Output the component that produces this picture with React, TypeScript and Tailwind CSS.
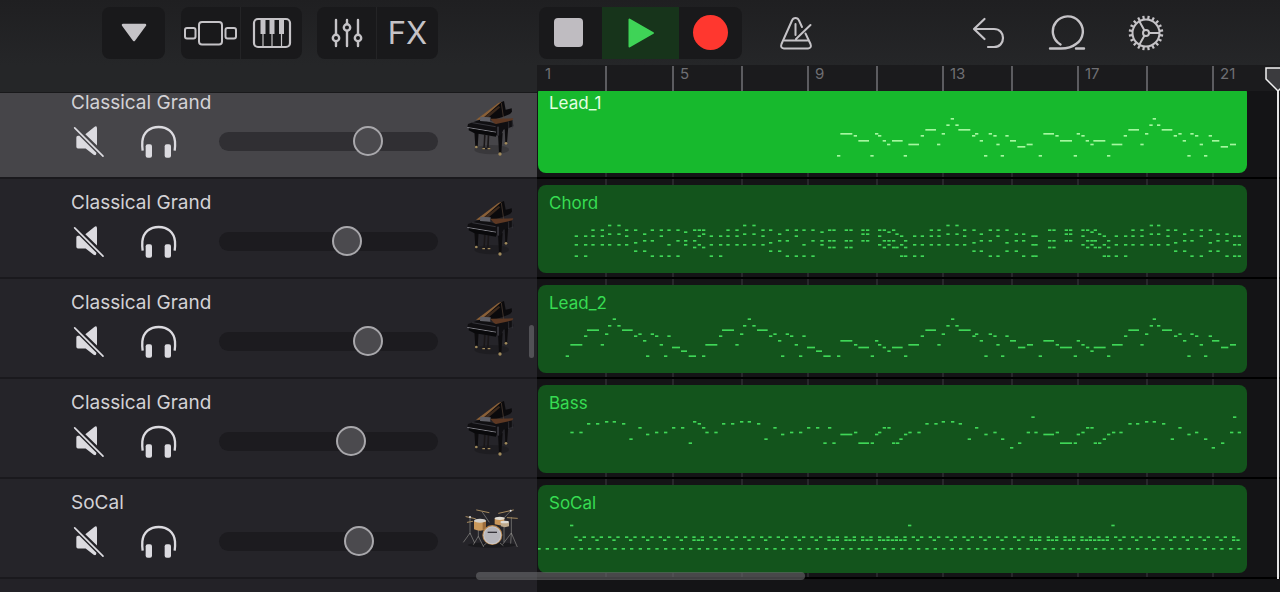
import { useState } from "react";

/* A note is [start, pitch row, length]; three units make one pixel. */
type Note = [number, number, number?];

const shift = (notes: Note[], dx: number, dy = 0): Note[] =>
  notes.map(([x, y, w]) => [x + dx, y + dy, w]);

const LEAD_1: Note[] = shift(
  [
    [51, 198], [61, 132, 36], [101, 138], [115, 153, 32], [151, 198], [165, 132], [174, 138], [188, 153],
    [201, 164], [216, 153, 32], [251, 198], [265, 164, 32], [302, 138], [316, 120, 32], [351, 164],
    [365, 132], [379, 106], [392, 87], [406, 106], [415, 120, 36], [456, 138], [465, 132], [479, 153],
    [492, 198], [506, 132], [520, 138], [529, 164], [542, 198], [556, 138], [570, 153, 18], [592, 171, 24],
    [620, 164, 18], [656, 198], [670, 132, 32], [706, 138], [720, 153, 36], [761, 198], [770, 132],
    [784, 138], [797, 153], [811, 164], [820, 153, 36], [861, 198], [875, 164, 32], [911, 138],
    [925, 120, 32], [961, 164], [975, 132], [988, 106], [998, 87], [1011, 106], [1025, 120, 32],
    [1061, 138], [1075, 132], [1088, 153], [1102, 198], [1111, 132], [1125, 138], [1139, 164],
    [1152, 198], [1166, 138], [1176, 153, 22], [1202, 171, 22], [1230, 164, 18],
  ],
  870,
  30,
);

const LEAD_2: Note[] = [
  [107, 229], [121, 195, 36], [162, 169], [171, 151, 36], [212, 195], [225, 163], [234, 138], [248, 118],
  [262, 138], [276, 151, 32], [312, 169], [325, 163], [339, 183], [348, 229], [362, 163], [375, 169],
  [389, 195], [402, 229], [412, 169], [426, 203, 24], [453, 214, 18], [476, 229, 22], [516, 229],
  [526, 195, 36], [567, 169], [576, 151, 36], [616, 195], [630, 163], [639, 138], [653, 118], [667, 138],
  [681, 151, 32], [717, 169], [730, 163], [744, 183], [753, 229], [767, 163], [780, 169], [794, 195],
  [807, 229], [817, 169], [831, 203, 24], [858, 214, 18], [880, 229, 22], [921, 229], [931, 183, 36],
  [972, 195], [985, 203, 32], [1022, 229], [1035, 183], [1044, 195], [1058, 203], [1072, 214],
  [1086, 203, 32], [1122, 229], [1135, 195, 32],
  ...shift(
    [
      [62, 169], [76, 151, 32], [112, 195], [125, 163], [139, 138], [153, 118], [166, 138], [176, 151, 36],
      [217, 169], [225, 163], [239, 183], [253, 229], [266, 163], [280, 169], [289, 195], [303, 229],
      [316, 169], [330, 183, 18], [354, 203, 22], [381, 195, 18], [416, 229], [430, 183, 32], [467, 195],
      [480, 203, 36], [521, 229], [530, 183], [544, 195], [558, 203], [571, 214], [581, 203, 36],
      [621, 229], [636, 195, 32], [672, 169], [685, 151, 32], [721, 195], [735, 163], [749, 138],
      [758, 118], [771, 138], [786, 151, 30], [822, 169], [835, 163], [849, 183], [862, 229], [871, 163],
      [885, 169], [899, 195], [912, 229], [926, 169], [936, 183, 22], [963, 203, 22], [990, 195, 18],
    ],
    1110,
  ),
];

const BASS: Note[] = [
  [121, 158], [148, 158], [171, 132], [198, 132], [225, 126], [248, 126], [276, 132], [298, 178],
  [325, 144], [348, 164], [375, 158], [402, 158], [426, 144], [453, 144], [476, 190], [489, 126],
  [503, 132], [516, 144], [526, 158], [553, 158], [576, 132], [603, 132], [630, 126], [653, 126],
  [681, 132], [703, 178], [730, 144], [753, 164], [780, 158], [807, 158], [831, 144], [858, 144],
  [880, 190], [894, 144], [907, 190], [931, 164, 36], [972, 158], [985, 190, 32], [1022, 190],
  [1035, 164], [1044, 158], [1058, 144], [1072, 144], [1086, 190], [1098, 190], [1108, 178], [1122, 164],
  ...shift(
    [
      [25, 158], [52, 158], [76, 132], [103, 132], [125, 126], [153, 126], [176, 132], [203, 178],
      [225, 144], [253, 164], [280, 158], [303, 178], [330, 204], [354, 190], [380, 158], [394, 112],
      [403, 158], [430, 164, 32], [467, 158], [480, 190, 36], [521, 190], [530, 164], [544, 158],
      [558, 144], [571, 144], [581, 190], [594, 190], [608, 178], [621, 164], [636, 158], [658, 158],
      [685, 132], [708, 132], [735, 126], [758, 126], [786, 132], [812, 178], [835, 144], [862, 164],
      [885, 158], [912, 178], [935, 204], [963, 190], [990, 158], [999, 112], [1013, 158],
    ],
    1110,
  ),
];

const VOICINGS: Record<string, number[]> = {
  a: [169, 195, 229],
  b: [151, 169, 195],
  c: [137, 163, 195],
  d: [151, 189, 214],
  e: [163, 183, 214],
  f: [151, 183, 229],
  g: [151, 169, 229],
  h: [151, 195, 229],
  i: [157, 183, 195],
  j: [151, 183, 203],
  k: [151, 163, 183],
  l: [163, 195, 229],
  m: [163, 183, 229],
  n: [183, 203, 229],
  o: [151, 163, 203],
  p: [163, 203],
};

const CHORD_STEPS: [number, string][] = [
  [134, "a"], [162, "a"], [184, "b"], [212, "b"], [234, "c"], [262, "c"], [285, "b"], [312, "d"],
  [339, "e"], [362, "f"], [389, "g"], [412, "h"], [439, "f"], [462, "i"], [489, "j"], [503, "b"],
  [516, "o"], [539, "a"], [567, "a"], [589, "b"], [616, "b"], [639, "c"], [667, "c"], [694, "b"],
  [717, "d"], [744, "e"], [767, "f"], [794, "g"], [817, "h"], [844, "f"], [871, "i"], [894, "j"],
  [907, "j"], [944, "j"], [958, "j"], [994, "k"], [1008, "k"], [1044, "b"], [1058, "j"], [1072, "i"],
  [1086, "j"], [1096, "p"], [1110, "a"], [1122, "n"], [1149, "a"], [1172, "a"], [1199, "b"], [1222, "b"],
  [1249, "c"], [1276, "c"], [1299, "b"], [1327, "d"], [1349, "e"], [1376, "f"], [1399, "g"], [1426, "d"],
  [1454, "e"], [1476, "m"], [1504, "a"], [1513, "a"], [1554, "j"], [1567, "j"], [1604, "k"], [1617, "k"],
  [1654, "b"], [1668, "j"], [1681, "i"], [1691, "j"], [1704, "p"], [1718, "a"], [1731, "n"], [1754, "a"],
  [1782, "a"], [1804, "b"], [1831, "b"], [1859, "c"], [1881, "c"], [1909, "b"], [1932, "d"], [1959, "e"],
  [1981, "f"], [2009, "g"], [2036, "d"], [2059, "e"], [2086, "m"], [2109, "a"], [2123, "a"],
];

const CHORD: Note[] = CHORD_STEPS.flatMap(([x, v]) => VOICINGS[v].map((y): Note => [x, y]));

function buildDrums(): Note[] {
  const notes: Note[] = [[120, 137], [1134, 137], [1744, 137]];
  for (let i = 0; i < 84; i++) notes.push([Math.round(22 + i * 25.3), 207]);
  const fills = [7, 15, 16, 17, 18, 19, 27, 28, 29, 30, 31, 39];
  const rolls = [18, 19, 30, 31];
  for (let cell = 0; cell < 40; cell++) {
    const at = (step: number) => Math.round(133 + cell * 50.6 + step * 12.6);
    notes.push([at(0), 172], [at(1), 181]);
    if (cell < 39) notes.push([at(2), 172]);
    if (fills.includes(cell)) notes.push([at(0), 181]);
    if (fills.includes(cell) && cell < 39) notes.push([at(2), 181]);
    if (rolls.includes(cell) && cell % 2 === 0) notes.push([at(3), 181]);
  }
  return notes;
}

const TRACKS = [
  { name: "Classical Grand", region: "Lead_1", volume: 71, art: "piano", notes: LEAD_1 },
  { name: "Classical Grand", region: "Chord", volume: 60, art: "piano", notes: CHORD },
  { name: "Classical Grand", region: "Lead_2", volume: 71, art: "piano", notes: LEAD_2 },
  { name: "Classical Grand", region: "Bass", volume: 62, art: "piano", notes: BASS },
  { name: "SoCal", region: "SoCal", volume: 66, art: "drums", notes: buildDrums() },
];

const BARS = [1, 5, 9, 13, 17, 21];

function Piano() {
  return (
    <svg viewBox="75 35 150 180" className="h-[60px] w-[50px]" aria-hidden="true">
      <ellipse cx="155" cy="190" rx="52" ry="14" fill="#000" opacity=".18" />
      <path d="M103 135l3 47h7l3-45zM174 142l3 58h7l4-60zM194 122l2 48h5l4-50z" fill="#0d0c0e" />
      <path d="M132 145l-2 42h4l3-40zM143 147l-2 40h5l2-40zM126 184h25v5h-25z" fill="#1a1718" />
      <path d="M113 98L176 51l16-7 5 26 18-4 1 10-6 7-22 9-40 12z" fill="#0b0a0c" />
      <path d="M108 100L175 50l10-4-62 55z" fill="#8a6038" />
      <path d="M126 97l50-38 5 4-40 34z" fill="#3a281c" />
      <path d="M184 50l7 48" stroke="#58463a" strokeWidth="2" />
      <path d="M150 97l70-1-5 10-48 9z" fill="#5d3823" />
      <path d="M84 113l40-14 44 14 50-11 2 18-16 6-14 4-8 19-76-10-24-16z" fill="#100f12" />
      <path d="M121 91l31 2-1 13-31-2z" fill="#5f5f66" />
      <path d="M97 109l70 12" stroke="#4a4a52" strokeWidth="2" />
      <path d="M82 122l86 14v3l-86-14z" fill="#85858c" />
      <path d="M86 126l82 13v12l-66-11-16-8z" fill="#09090b" />
      <path d="M174 121v27" stroke="#55555d" strokeWidth="3" />
      <path d="M206 106v22M217 102v24" stroke="#39393f" strokeWidth="2" />
      <g fill="#a08a5c">
        <circle cx="109" cy="182" r="4" />
        <circle cx="180" cy="203" r="5" />
        <circle cx="198" cy="171" r="4" />
        <path d="M127 185h8v4h-8zM143 185h8v4h-8z" />
      </g>
    </svg>
  );
}

function Drums() {
  return (
    <svg viewBox="33 82 174 126" className="h-[42px] w-[58px]" aria-hidden="true">
      <ellipse cx="125" cy="196" rx="72" ry="8" fill="#000" opacity=".3" />
      <g fill="none" stroke="#8d8b88" strokeWidth="2">
        <path d="M60 114v50M60 160l-20 28M60 160l14 30M85 148v25M85 170l-15 25M85 170l16 32M96 96l22 32" />
        <path d="M182 94l-25 26M184 112v52M184 160l-26 34M184 160l18 42M184 160l-2 32M162 138v50M110 190l-10 8M150 190l10 8" />
      </g>
      <path d="M72 124h36v25q-18 8-36 0z" fill="#c9985b" />
      <path d="M98 127h10v22l-10 2z" fill="#9b6c3b" />
      <ellipse cx="90" cy="123" rx="18" ry="6" fill="#d3d0ca" />
      <path d="M134 116h29v18q-14 5-29 0z" fill="#c99558" />
      <ellipse cx="149" cy="116" rx="15" ry="5" fill="#dedad2" />
      <path d="M152 128h25v12q-12 5-25 0z" fill="#bda98c" />
      <ellipse cx="164" cy="127" rx="13" ry="4" fill="#dddad4" />
      <circle cx="127" cy="166" r="30" fill="#b98850" />
      <circle cx="127" cy="167" r="27" fill="#c7c6ca" />
      <circle cx="127" cy="167" r="24" fill="#b6b5bb" />
      <path d="M113 158h28" stroke="#36343a" strokeWidth="4" />
      <g stroke="#a58a5e" strokeWidth="3" strokeLinecap="round">
        <path d="M80 91l37 8M146 101l44-10M48 111l28 6M172 114l30 2M52 128l16-3" />
      </g>
      <circle cx="60" cy="112" r="3" fill="#ddd" />
      <circle cx="182" cy="93" r="3" fill="#ddd" />
    </svg>
  );
}

function MuteIcon() {
  return (
    <svg viewBox="42 117 96 98" className="h-[33px] w-8" fill="currentColor" aria-hidden="true">
      <path d="M79 144l26-21q9-6 9 3v52zM57 149h4l51 51v2q-1 8-8 4l-24-19H57q-5 0-5-5v-28q0-5 5-5z" />
      <path d="M47 125l85 85" stroke="currentColor" strokeWidth="5" strokeLinecap="round" />
    </svg>
  );
}

function HeadphonesIcon() {
  return (
    <svg viewBox="241 113 111 99" className="h-[33px] w-[37px]" aria-hidden="true">
      <path d="M249 190q-2-14-1-28c3-28 23-43 49-43s46 15 49 43q1 14-1 28" fill="none" stroke="currentColor" strokeWidth="7" />
      <rect x="258" y="171" width="19" height="40" rx="6" fill="currentColor" />
      <rect x="315" y="171" width="19" height="40" rx="6" fill="currentColor" />
    </svg>
  );
}

function TrackHeader({ track, selected }: { track: (typeof TRACKS)[number]; selected: boolean }) {
  const [volume, setVolume] = useState(track.volume);
  return (
    <div
      className={`flex h-[100px] shrink-0 items-start gap-[23px] border-b-2 border-[#1a191d] pl-[71px] ${
        selected ? "bg-[#464549]" : "bg-[#252429]"
      }`}
    >
      <div className="flex w-[367px] flex-col gap-3 pt-3.5">
        <div className="text-[19px] leading-5 text-[#d3d2d6]">{track.name}</div>
        <div className="flex h-8 items-center pl-0.5 text-[#dcdbe0]">
          <button type="button" aria-label={`Mute ${track.region}`}>
            <MuteIcon />
          </button>
          <button type="button" aria-label={`Solo ${track.region}`} className="ml-[35px]">
            <HeadphonesIcon />
          </button>
          <input
            type="range"
            aria-label={`${track.region} volume`}
            value={volume}
            onChange={(e) => setVolume(Number(e.target.value))}
            className={`ml-auto h-[19px] w-[219px] appearance-none rounded-full [&::-webkit-slider-thumb]:size-[30px] [&::-webkit-slider-thumb]:appearance-none [&::-webkit-slider-thumb]:rounded-full [&::-webkit-slider-thumb]:border-2 [&::-webkit-slider-thumb]:border-[#a9a8ac] [&::-webkit-slider-thumb]:bg-[#4b4a4e] ${
              selected ? "bg-[#302f33]" : "bg-[#1c1b1f]"
            }`}
          />
        </div>
      </div>
      <div className="flex h-full w-[58px] items-center justify-center">
        {track.art === "piano" ? <Piano /> : <Drums />}
      </div>
    </div>
  );
}

function Region({ track, selected }: { track: (typeof TRACKS)[number]; selected: boolean }) {
  return (
    <div
      className={`relative h-[88px] w-[709px] shrink-0 overflow-hidden rounded-lg ${
        selected ? "bg-[#17b92d]" : "bg-[#13541c]"
      }`}
    >
      <div className={`pt-2 pl-[11px] text-[17px] leading-5 ${selected ? "text-[#e4ffe2]" : "text-[#37dc52]"}`}>
        {track.region}
      </div>
      <svg
        viewBox="24 15 2127 264"
        className="absolute inset-0 h-[88px] w-[709px]"
        fill={selected ? "#a5f7a0" : "#3fd757"}
        aria-hidden="true"
      >
        {track.notes.map(([x, y, w], i) => (
          <rect key={i} x={x} y={y - 3} width={w ?? 10} height="5" />
        ))}
      </svg>
    </div>
  );
}

function BarGrid({ labels }: { labels?: boolean }) {
  const tick = labels ? "border-l-2 border-[#5c5c60]" : "border-l-2 border-[#28282b]";
  return (
    <div className="flex h-full">
      {BARS.map((bar) => (
        <div key={bar} className={`grid w-[135px] shrink-0 grid-cols-2 text-[#6f6f73] ${bar === 1 ? "" : tick}`}>
          <span className={`text-[15px] leading-4 ${bar === 1 ? "pl-2" : "pl-1.5"}`}>{labels ? bar : ""}</span>
          <span className={tick} />
        </div>
      ))}
    </div>
  );
}

const TEETH = Array.from({ length: 20 }, (_, i) => i * 18 + 9);

function Toolbar() {
  return (
    <header className="flex h-[65px] shrink-0 items-center bg-linear-to-b from-[#1f1f21] to-[#252628] pr-[116px] text-[#c5c3c7]">
      <div className="flex h-[52px] w-[539px] shrink-0 pl-[102px]">
        <button type="button" aria-label="Menu" className="flex w-[63px] items-center justify-center rounded-lg bg-[#19191b]">
          <svg viewBox="0 0 28 20" className="h-5 w-7" aria-hidden="true">
            <path d="M3 2h22L14 17z" fill="currentColor" stroke="currentColor" strokeWidth="2.5" strokeLinejoin="round" />
          </svg>
        </button>
        <div className="ml-4 flex w-[121px] overflow-hidden rounded-lg bg-[#19191b]">
          <button type="button" aria-label="Sound browser" className="flex w-[60px] items-center justify-center border-r border-[#242426]">
            <svg viewBox="0 0 54 26" className="h-[26px] w-[54px]" fill="none" stroke="currentColor" strokeWidth="2" aria-hidden="true">
              <rect x="15" y="2" width="23" height="22.5" rx="3" />
              <rect x="1" y="8" width="10.5" height="10.5" rx="2" />
              <rect x="41.500" y="8" width="10.5" height="10.5" rx="2" />
            </svg>
          </button>
          <button type="button" aria-label="Instrument" className="flex flex-1 items-center justify-center">
            <svg viewBox="0 0 40 32" className="h-8 w-10" fill="none" stroke="currentColor" strokeWidth="2.200" aria-hidden="true">
              <rect x="2" y="2" width="36" height="28" rx="4" />
              <path d="M11 17v13M20 17v13M29.500 17v13" strokeWidth="1.2" />
              <path d="M8.500 3h5v14h-5zM17.500 3h5v14h-5zM27 3h5v14h-5z" fill="currentColor" stroke="none" />
            </svg>
          </button>
        </div>
        <div className="ml-[15px] flex w-[121px] overflow-hidden rounded-lg bg-[#19191b]">
          <button type="button" aria-label="Track controls" className="flex w-[60px] items-center justify-center border-r border-[#242426]">
            <svg viewBox="0 0 32 30" className="h-[30px] w-8" fill="none" stroke="currentColor" strokeWidth="2.400" strokeLinecap="round" aria-hidden="true">
              <path d="M5 2v14M5 24v4M16 2v4M16 13v15M27 2v14M27 24v4" />
              <circle cx="5" cy="20" r="3.200" />
              <circle cx="16" cy="9.500" r="3.200" />
              <circle cx="27" cy="20" r="3.200" />
            </svg>
          </button>
          <button type="button" className="flex flex-1 items-center justify-center text-[31px] leading-9">
            FX
          </button>
        </div>
      </div>
      <div className="flex h-[52px] shrink-0 overflow-hidden rounded-lg bg-[#19191b]">
        <button type="button" aria-label="Stop" className="flex w-[63px] items-center justify-center">
          <span className="-ml-1 size-[29px] rounded-sm bg-[#bfbcc1]" />
        </button>
        <button type="button" aria-label="Play" className="flex w-[77px] items-center justify-center bg-[#17341b]">
          <svg viewBox="0 0 28 32" className="h-8 w-7" aria-hidden="true">
            <path d="M2.500 2.500v27L26 16z" fill="#3fd357" stroke="#3fd357" strokeWidth="2" strokeLinejoin="round" />
          </svg>
        </button>
        <button type="button" aria-label="Record" className="flex w-[63px] items-center justify-center">
          <span className="size-[35px] rounded-full bg-[#ff372f]" />
        </button>
      </div>
      <button type="button" aria-label="Metronome" className="ml-[37px]">
        <svg viewBox="0 0 34 34" className="size-[34px]" fill="none" stroke="currentColor" strokeWidth="2" strokeLinecap="round" strokeLinejoin="round" aria-hidden="true">
          <path d="M26.500 17.500l5 10.500q1.500 4-2.500 4.500H5q-4-.5-2.500-4.500L13 4.500q1-2.500 3.500-2.500T20 4.500l3 6.500" />
          <path d="M5.500 24.500h23M16.500 8v11M17 23L31.500 9" />
        </svg>
      </button>
      <div className="ml-auto flex items-center gap-[42px]">
        <button type="button" aria-label="Undo">
          <svg viewBox="0 0 34 34" className="size-[34px]" fill="none" stroke="currentColor" strokeWidth="2.200" strokeLinecap="round" strokeLinejoin="round" aria-hidden="true">
            <path d="M12.500 3L2 13 12.500 23M2.500 13H22c12 0 12 18 0 18h-6" />
          </svg>
        </button>
        <button type="button" aria-label="Loop browser">
          <svg viewBox="0 0 38 36" className="h-9 w-[38px]" fill="none" stroke="currentColor" strokeWidth="2.400" strokeLinecap="round" aria-hidden="true">
            <path d="M12.500 29.500A15 15 0 1 1 28 29Q22.500 33.500 13 33.500H2M28 33.500h8" />
          </svg>
        </button>
        <button type="button" aria-label="Settings">
          <svg viewBox="-18 -18 36 36" className="size-9" fill="none" stroke="currentColor" strokeWidth="2" aria-hidden="true">
            <circle r="13.500" />
            <circle r="3" />
            <path d="M3 0h10.500M-1.500-2.600L-6.700-11.700M-1.500 2.600L-6.700 11.700" />
            {TEETH.map((a) => (
              <path key={a} d="M14 0h3.300" strokeWidth="2.200" transform={`rotate(${a})`} />
            ))}
          </svg>
        </button>
      </div>
    </header>
  );
}

export default function App() {
  return (
    <div className="relative flex h-screen flex-col overflow-hidden bg-[#141416] font-['Inter','Liberation_Sans',sans-serif]">
      <Toolbar />
      <main className="relative flex min-h-0 flex-1">
        <section aria-label="Tracks" className="relative flex w-[537px] shrink-0 flex-col bg-[#232227]">
          <div className="h-7 shrink-0 border-b border-[#19191b] bg-[#252628]" />
          <div className="min-h-0 flex-1 overflow-hidden">
            <div className="-mt-[14px] flex flex-col">
              {TRACKS.map((track, i) => (
                <TrackHeader key={track.region} track={track} selected={i === 0} />
              ))}
            </div>
          </div>
          <div className="absolute top-[260px] right-[3px] h-[33px] w-[5px] rounded-full bg-[#525156]" />
        </section>

        <section aria-label="Timeline" className="relative flex min-w-0 flex-1 flex-col overflow-hidden">
          <div className="h-[26px] shrink-0 overflow-hidden bg-[#1b1b1d] pt-px">
            <BarGrid labels />
          </div>
          <div className="relative min-h-0 flex-1 overflow-hidden">
            <div className="absolute inset-x-0 top-0 h-[488px]">
              <BarGrid />
            </div>
            <div className="relative -mt-[12px] flex flex-col">
              {TRACKS.map((track, i) => (
                <div key={track.region} className="h-[100px] shrink-0 border-b-2 border-black pt-1.5 pl-px">
                  <Region track={track} selected={i === 0} />
                </div>
              ))}
            </div>
          </div>
          <div className="absolute top-[2px] -right-[12px] flex h-[512px] w-7 flex-col items-center">
            <svg viewBox="0 0 26 26" className="h-[26px] w-[26px]" aria-hidden="true">
              <path d="M1 1h24v11L13 24 1 12z" fill="#3b3b3e" stroke="#f2f2f2" strokeWidth="1.500" />
            </svg>
            <div className="-mt-0.5 w-0.5 flex-1 bg-[#e6e6e6]" />
          </div>
        </section>

        <div className="absolute bottom-3 left-[476px] h-2 w-[329px] rounded-full bg-[#6b6b6e]/60" />
      </main>
    </div>
  );
}
